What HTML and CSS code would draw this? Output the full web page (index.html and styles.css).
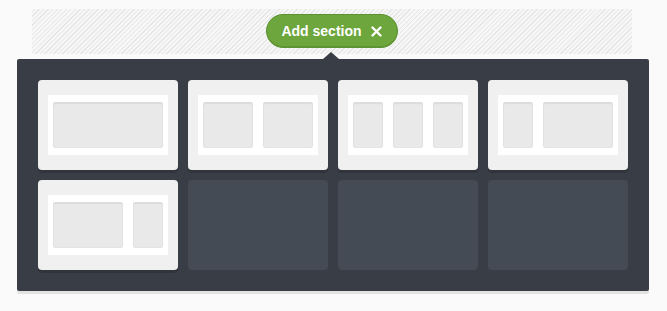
FILE: index.html
```html
<!DOCTYPE html>
<html>
<head>
<meta charset="utf-8">
<link rel="stylesheet" href="styles.css">
</head>
<body>
<div class="page">
  <div class="dropzone">
    <button class="add-btn">
      <span class="add-label">Add section</span>
      <svg class="close-icon" width="11" height="11" viewBox="0 0 11 11"><path d="M1.5 1.5 L9.5 9.5 M9.5 1.5 L1.5 9.5" stroke="#fff" stroke-width="2.4" stroke-linecap="round"/></svg>
    </button>
  </div>
  <div class="panel">
    <div class="grid">
      <div class="card">
        <div class="frame"><div class="col w110"></div></div>
      </div>
      <div class="card">
        <div class="frame"><div class="col w50"></div><div class="col w50"></div></div>
      </div>
      <div class="card">
        <div class="frame"><div class="col w30"></div><div class="col w30"></div><div class="col w30"></div></div>
      </div>
      <div class="card">
        <div class="frame"><div class="col w30"></div><div class="col w70"></div></div>
      </div>
      <div class="card">
        <div class="frame"><div class="col w70"></div><div class="col w30"></div></div>
      </div>
      <div class="card empty"></div>
      <div class="card empty"></div>
      <div class="card empty"></div>
    </div>
  </div>
</div>
</body>
</html>
```

FILE: styles.css
```css
html, body {
  margin: 0;
  padding: 0;
  background: #fafafa;
  font-family: "Liberation Sans", Arial, sans-serif;
}

.page {
  width: 667px;
  height: 311px;
  padding-top: 9px;
  box-sizing: border-box;
}

.dropzone {
  margin: 0 35px 0 32px;
  width: 600px;
  height: 45px;
  display: flex;
  align-items: center;
  justify-content: center;
  background-color: #f6f6f6;
  background-image: repeating-linear-gradient(
    -45deg,
    #f6f6f6 0px,
    #f6f6f6 2.2px,
    #e6e6e6 2.2px,
    #e6e6e6 3.2px
  );
}

.add-btn {
  height: 34px;
  padding: 0 15px 0 14px;
  border-radius: 17px;
  border: 1px solid #5c9231;
  background: #6ca63d;
  box-shadow: inset 0 -1px 0 #5f9534;
  display: flex;
  align-items: center;
  gap: 0;
  cursor: pointer;
  margin-top: -1px;
}

.add-label {
  color: #fff;
  font-family: "Liberation Sans", Arial, sans-serif;
  font-weight: bold;
  font-size: 14px;
  letter-spacing: 0;
}

.close-icon {
  margin-left: 9px;
  display: block;
}

.panel {
  position: relative;
  margin: 5px 0 0 17px;
  width: 632px;
  height: 232px;
  padding: 21px;
  box-sizing: border-box;
  background: #393d45;
  border-radius: 2px;
  box-shadow: 0 3px 0 #e2e2e2;
}

.panel::before {
  content: "";
  position: absolute;
  top: -7px;
  left: 306px;
  border-left: 8px solid transparent;
  border-right: 8px solid transparent;
  border-bottom: 7px solid #393d45;
}

.grid {
  display: grid;
  grid-template-columns: repeat(4, 140px);
  grid-template-rows: 90px 90px;
  gap: 10px;
}

.card {
  background: #f0f0f0;
  border-radius: 4px;
  box-shadow: 0 3px 0 #31343b;
  display: flex;
  align-items: center;
  justify-content: center;
}

.card.empty {
  background: #454b55;
  box-shadow: none;
}

.frame {
  width: 120px;
  height: 60px;
  background: #ffffff;
  padding: 7px 5px;
  box-sizing: border-box;
  display: flex;
  gap: 10px;
}

.col {
  height: 46px;
  background: #e9e9e9;
  border-radius: 3px;
  box-shadow: inset 0 2px 1px #dcdcdc, inset 0 0 0 1px #e3e3e3;
}

.w110 { width: 110px; }
.w70 { width: 70px; }
.w50 { width: 50px; }
.w30 { width: 30px; }
```
